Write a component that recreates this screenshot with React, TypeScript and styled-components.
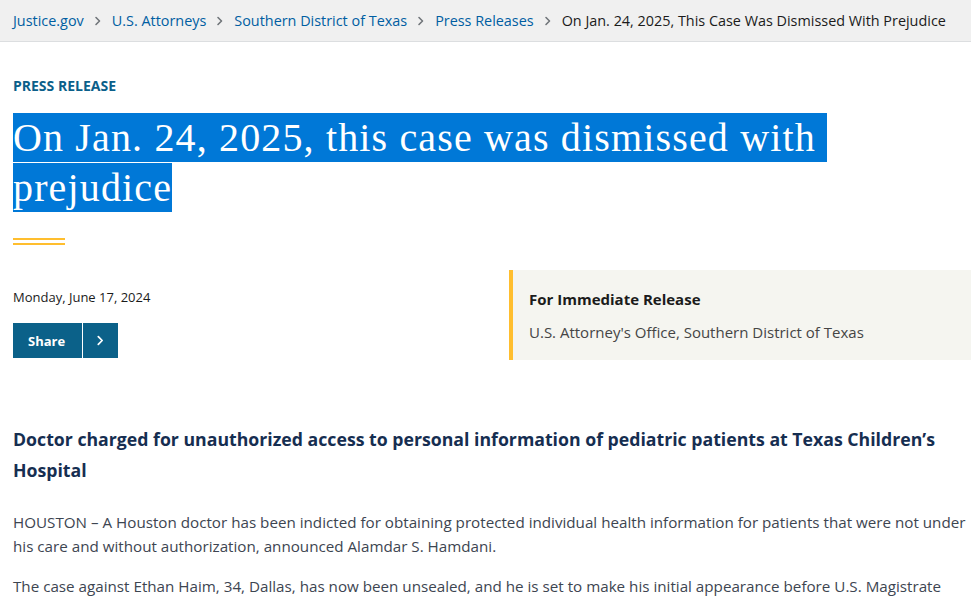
import styled, { createGlobalStyle } from "styled-components";

const GlobalStyle = createGlobalStyle`
  html, body {
    margin: 0;
    padding: 0;
    background: #ffffff;
    font-family: "Open Sans", "Noto Sans", sans-serif;
    overflow: hidden;
  }
`;

const crumbs = [
  "Justice.gov",
  "U.S. Attorneys",
  "Southern District of Texas",
  "Press Releases",
];

const Chevron = ({ color = "#71767a", size = 10 }: { color?: string; size?: number }) => (
  <svg width={size} height={size} viewBox="0 0 10 10" fill="none">
    <path d="M3 1.5 L6.5 5 L3 8.5" stroke={color} strokeWidth="1.6" strokeLinecap="round" strokeLinejoin="round" />
  </svg>
);

const App = () => {
  return (
    <>
      <GlobalStyle />
      <Breadcrumb>
        {crumbs.map((c) => (
          <Crumb key={c}>
            <CrumbLink href="#">{c}</CrumbLink>
            <Chevron />
          </Crumb>
        ))}
        <Current>On Jan. 24, 2025, This Case Was Dismissed With Prejudice</Current>
      </Breadcrumb>

      <Main>
        <Eyebrow>Press Release</Eyebrow>
        <Title>
          <Highlight>{"On Jan. 24, 2025, this case was dismissed with\u00a0\u200bprejudice"}</Highlight>
        </Title>
        <Rule />

        <MetaRow>
          <LeftMeta>
            <DateText>Monday, June 17, 2024</DateText>
            <ShareButton>
              <ShareLabel>Share</ShareLabel>
              <ShareArrow>
                <Chevron color="#ffffff" size={11} />
              </ShareArrow>
            </ShareButton>
          </LeftMeta>
          <ReleaseBox>
            <ReleaseTitle>For Immediate Release</ReleaseTitle>
            <ReleaseText>U.S. Attorney's Office, Southern District of Texas</ReleaseText>
          </ReleaseBox>
        </MetaRow>

        <Subhead>
          Doctor charged for unauthorized access to personal information of pediatric patients at Texas
          Children’s Hospital
        </Subhead>
        <Body>
          HOUSTON – A Houston doctor has been indicted for obtaining protected individual health information
          for patients that were not under his care and without authorization, announced Alamdar S. Hamdani.
        </Body>
        <Body>
          The case against Ethan Haim, 34, Dallas, has now been unsealed, and he is set to make his initial
          appearance before U.S. Magistrate Judge Dena Hanovice Palermo at 2 p.m.
        </Body>
      </Main>
    </>
  );
};

export default App;

const Breadcrumb = styled.nav`
  height: 41px;
  background: #f0f0f0;
  border-bottom: 1px solid #dcdee0;
  display: flex;
  align-items: center;
  padding: 0 13px;
  font-size: 14.4px;
  white-space: nowrap;
`;

const Crumb = styled.span`
  display: flex;
  align-items: center;
  gap: 9px;
  margin-right: 9px;
`;

const CrumbLink = styled.a`
  color: #005ea2;
  text-decoration: none;
`;

const Current = styled.span`
  color: #1b1b1b;
`;

const Main = styled.main`
  padding: 0 0 0 13px;
`;

const Eyebrow = styled.div`
  margin-top: 35px;
  font-size: 14px;
  font-weight: 700;
  text-transform: uppercase;
  color: #0b5f8a;
  line-height: 18px;
`;

const Title = styled.h1`
  margin: 18px 0 0;
  font-family: "Liberation Serif", "DejaVu Serif", serif;
  font-weight: 400;
  font-size: 40px;
  letter-spacing: 1.15px;
  line-height: 50px;
  max-width: 900px;
`;

const Highlight = styled.span`
  background: #0078d7;
  color: #ffffff;
  padding: 2px 0;
  box-decoration-break: clone;
  -webkit-box-decoration-break: clone;
`;

const Rule = styled.div`
  margin-top: 25px;
  width: 52px;
  height: 7px;
  border-top: 2px solid #ffbe2e;
  border-bottom: 2px solid #ffbe2e;
  box-sizing: border-box;
`;

const MetaRow = styled.div`
  margin-top: 25px;
  display: grid;
  grid-template-columns: 496px 1fr;
`;

const LeftMeta = styled.div`
  padding-top: 18px;
`;

const DateText = styled.div`
  font-size: 13px;
  line-height: 18px;
  color: #1b1b1b;
`;

const ShareButton = styled.button`
  margin-top: 17px;
  display: flex;
  align-items: stretch;
  height: 35px;
  padding: 0;
  border: none;
  background: #0b6189;
  color: #ffffff;
  cursor: pointer;
`;

const ShareLabel = styled.span`
  display: flex;
  align-items: center;
  width: 70px;
  padding-left: 15px;
  box-sizing: border-box;
  font-family: "Open Sans", sans-serif;
  font-weight: 700;
  font-size: 13px;
  border-right: 1px solid #ffffff;
`;

const ShareArrow = styled.span`
  display: flex;
  align-items: center;
  justify-content: center;
  width: 35px;
`;

const ReleaseBox = styled.div`
  background: #f5f5f0;
  border-left: 4px solid #ffbe2e;
  padding: 19px 16px 18px;
`;

const ReleaseTitle = styled.div`
  font-weight: 700;
  font-size: 15px;
  line-height: 20px;
  color: #1b1b1b;
`;

const ReleaseText = styled.div`
  margin-top: 13px;
  font-size: 15px;
  line-height: 20px;
  color: #454545;
`;

const Subhead = styled.h2`
  margin: 64px 0 0;
  padding-bottom: 8px;
  font-size: 17.7px;
  font-weight: 700;
  line-height: 31px;
  color: #162e51;
  max-width: 940px;
`;

const Body = styled.p`
  margin: 16px 0 0;
  font-size: 15.2px;
  line-height: 24px;
  color: #3d4551;
  max-width: 956px;
`;
